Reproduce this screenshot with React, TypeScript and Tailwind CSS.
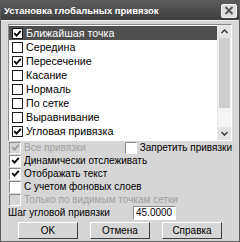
import type { ReactNode } from "react";

const listItems = [
  { label: "Ближайшая точка", checked: true },
  { label: "Середина", checked: false },
  { label: "Пересечение", checked: true },
  { label: "Касание", checked: false },
  { label: "Нормаль", checked: false },
  { label: "По сетке", checked: false },
  { label: "Выравнивание", checked: false },
  { label: "Угловая привязка", checked: true },
];

function Tick({ color = "#000" }: { color?: string }) {
  return (
    <svg width="9" height="9" viewBox="0 0 9 9">
      <polyline points="1.2,4.2 3.5,6.6 7.8,1.8" fill="none" stroke={color} strokeWidth="1.8" />
    </svg>
  );
}

function ListCheck({ checked }: { checked: boolean }) {
  return (
    <span className="w-[11px] h-[11px] border border-[#1a1a1a] bg-white flex items-center justify-center shrink-0">
      {checked && <Tick />}
    </span>
  );
}

function Check({ checked, disabled, children }: { checked: boolean; disabled?: boolean; children: ReactNode }) {
  return (
    <div className="flex items-center h-[13px]">
      <span
        className={`w-[12px] h-[12px] border-t border-l border-t-[#8a8a8a] border-l-[#8a8a8a] border-r border-b border-r-white border-b-white flex items-center justify-center shrink-0 ${
          disabled ? "bg-[#d6d6d6]" : "bg-white"
        }`}
      >
        {checked && <Tick color={disabled ? "#9a9a9a" : "#000"} />}
      </span>
      <span className={`ml-[3px] whitespace-nowrap ${disabled ? "text-[#a0a0a0]" : "text-black"}`}>{children}</span>
    </div>
  );
}

function Btn({ children }: { children: ReactNode }) {
  return (
    <div className="w-[60px] h-[17px] bg-[#d6d6d6] border border-t-white border-l-white border-r-[#404040] border-b-[#404040] flex items-center justify-center">
      {children}
    </div>
  );
}

export default function App() {
  return (
    <div className="w-[240px] h-[242px] bg-[#d6d6d6] border border-[#5a5a5a] flex flex-col text-[10px] leading-none font-['Liberation_Sans',Arial,sans-serif] text-black overflow-hidden">
      {/* title bar */}
      <div className="h-[20px] bg-gradient-to-b from-[#5c5c5c] to-[#3e3e3e] flex items-center pl-[3px] pr-[2px] border-b border-[#f0f0f0]">
        <span className="text-white font-bold text-[9.5px] whitespace-nowrap">Установка глобальных привязок</span>
        <div className="ml-auto w-[16px] h-[14px] bg-[#dcdcdc] border border-[#f4f4f4] rounded-[2px] flex items-center justify-center">
          <svg width="10" height="9" viewBox="0 0 10 9">
            <path d="M1.5 1 L8.5 8 M8.5 1 L1.5 8" stroke="#555" strokeWidth="1.8" />
          </svg>
        </div>
      </div>

      <div className="flex flex-col px-[7px] pt-[3px]">
        {/* list */}
        <div className="h-[117px] bg-white border border-t-[#8a8a8a] border-l-[#8a8a8a] border-r-white border-b-white flex">
          <div className="flex-1 flex flex-col pt-[1px] text-[10.7px]">
            {listItems.map((it, i) => (
              <div
                key={it.label}
                className={`h-[14px] flex items-center pl-[3px] ${i === 0 ? "bg-[#4f4f4f] text-white" : ""}`}
              >
                <ListCheck checked={it.checked} />
                <span className="ml-[3px] whitespace-nowrap">{it.label}</span>
              </div>
            ))}
          </div>
          <div className="w-[14px] flex flex-col bg-[#f4f4f4] border-l border-[#e6e6e6]">
            <div className="h-[13px] bg-[#e4e4e4] flex items-center justify-center">
              <svg width="7" height="5" viewBox="0 0 7 5">
                <path d="M0.5 4 L3.5 1 L6.5 4" fill="none" stroke="#333" strokeWidth="1.4" />
              </svg>
            </div>
            <div className="h-[70px] bg-[#cfcfcf] mx-[1px]" />
            <div className="flex-1" />
            <div className="h-[13px] bg-[#e4e4e4] flex items-center justify-center">
              <svg width="7" height="5" viewBox="0 0 7 5">
                <path d="M0.5 1 L3.5 4 L6.5 1" fill="none" stroke="#333" strokeWidth="1.4" />
              </svg>
            </div>
          </div>
        </div>

        {/* options */}
        <div className="flex flex-col pl-[1px]">
          <div className="flex">
            <div className="w-[125px]">
              <Check checked disabled>Все привязки</Check>
            </div>
            <Check checked={false}>Запретить привязки</Check>
          </div>
          <Check checked>Динамически отслеживать</Check>
          <Check checked>Отображать текст</Check>
          <Check checked={false}>С учетом фоновых слоев</Check>
          <Check checked={false} disabled>Только по видимым точкам сетки</Check>
        </div>

        <div className="flex items-center h-[14px]">
          <span className="w-[125px] whitespace-nowrap">Шаг угловой привязки</span>
          <div className="w-[43px] h-[14px] bg-white border border-t-[#8a8a8a] border-l-[#8a8a8a] border-r-white border-b-white flex items-center pl-[2px]">
            45.0000
          </div>
        </div>

        <div className="flex gap-[12px] mt-[2px] pl-[10px]">
          <Btn>OK</Btn>
          <Btn>Отмена</Btn>
          <Btn>Справка</Btn>
        </div>
      </div>
    </div>
  );
}
